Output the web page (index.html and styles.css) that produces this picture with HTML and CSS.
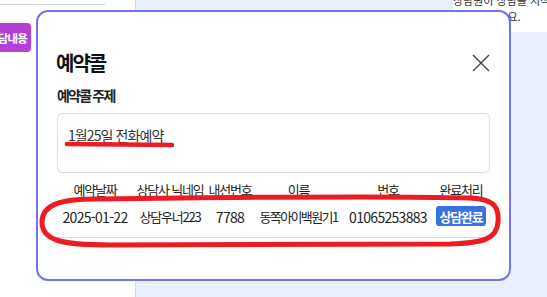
FILE: index.html
```html
<!DOCTYPE html>
<html lang="ko">
<head>
    <meta charset="UTF-8">
    <title>예약콜</title>
    <link rel="stylesheet" href="styles.css">
</head>
<body>

<div class="app">
    <aside class="side">
        <div class="side-line"></div>
        <button class="memo-btn">상담내용</button>
    </aside>
    <main class="main">
        <div class="notice">상담원이 상담을 시작하면 보여드려<br>요.</div>
    </main>
</div>

<div class="modal">
    <div class="modal-head">
        <h2>예약콜</h2>
        <button class="close" aria-label="닫기">
            <svg width="18" height="18" viewBox="0 0 18 18">
                <path d="M1 1 L17 17 M17 1 L1 17" stroke="#444" stroke-width="1.4" fill="none"/>
            </svg>
        </button>
    </div>
    <div class="field-label">예약콜 주제</div>
    <div class="subject">1월25일 전화예약</div>

    <div class="thead">
        <span>예약날짜</span>
        <span>상담사 닉네임</span>
        <span>내선번호</span>
        <span>이름</span>
        <span>번호</span>
        <span>완료처리</span>
    </div>
    <div class="trow">
        <span class="num">2025-01-22</span>
        <span class="mix">상담우너223</span>
        <span class="num">7788</span>
        <span class="ko">동쪽아이백원기1</span>
        <span class="num">01065253883</span>
        <span><button class="done-btn">상담완료</button></span>
    </div>
</div>

<!-- 빨간 표시 -->
<svg class="marks" width="547" height="297" viewBox="0 0 547 297">
    <path d="M67 144 L172 145" stroke="#ed1c24" stroke-width="4.5" stroke-linecap="round" fill="none"/>
    <path d="M95 199 C250 197 400 196 470 198 C497 199 499 210 498 222 C497 238 485 243 450 244 L110 245 C60 245 42 240 42 222 C42 205 60 199 95 199 Z"
          stroke="#ed1c24" stroke-width="5" fill="none"/>
</svg>

</body>
</html>
```

FILE: styles.css
```css
body {
    margin: 0;
    font-family: "Noto Sans CJK KR", "Noto Sans", sans-serif;
    color: #222;
    overflow: hidden;
}
.app {
    display: flex;
    height: 297px;
    width: 547px;
    overflow: hidden;
}
.side {
    width: 135px;
    flex-shrink: 0;
    background: #fff;
    border-right: 1px solid #d9d9d9;
}
.side-line {
    height: 1px;
    background: #cfcfcf;
    margin: 4px 30px 0 0;
}
.memo-btn {
    display: block;
    margin: 18px 0 0 -17px;
    height: 29px;
    padding: 0 4px 0 5px;
    background: #b33fd6;
    color: #fff;
    border: none;
    border-radius: 4px;
    font-family: inherit;
    font-size: 11.5px;
    font-weight: 700;
    letter-spacing: -0.8px;
}
.main {
    flex: 1;
    background: #e9effc;
    display: flex;
    justify-content: flex-end;
    align-items: flex-start;
}
.notice {
    flex-shrink: 0;
    width: 122px;
    margin: -8px -28px 0 0;
    padding-bottom: 8px;
    background: #fff;
    font-size: 11px;
    line-height: 16px;
    text-align: center;
    color: #333;
    white-space: nowrap;
}
.modal {
    position: absolute;
    left: 36px;
    top: 10px;
    width: 475px;
    height: 271px;
    box-sizing: border-box;
    padding: 38px 19px 0;
    background: #fff;
    border: 2px solid #7373ee;
    border-radius: 12px;
}
.modal-head {
    display: flex;
    justify-content: space-between;
    align-items: center;
}
.modal-head h2 {
    margin: 0 0 0 -1px;
    font-size: 20px;
    line-height: 25px;
    font-weight: 700;
    color: #111;
    letter-spacing: -2px;
}
.close {
    border: none;
    background: none;
    padding: 0;
    width: 18px;
    height: 18px;
    display: flex;
}
.field-label {
    margin-top: 10px;
    font-size: 14px;
    line-height: 20px;
    font-weight: 700;
    letter-spacing: -1.8px;
}
.subject {
    margin-top: 8px;
    height: 60px;
    box-sizing: border-box;
    padding: 11px 10px 0;
    border: 1px solid #dcdcdc;
    border-radius: 5px;
    font-size: 14px;
    line-height: 20px;
    letter-spacing: -0.9px;
    color: #333;
}
.thead, .trow {
    display: grid;
    grid-template-columns: 76px 74px 46px 91px 88px 58px;
    font-size: 13px;
    line-height: 18px;
}
.thead span, .trow span {
    justify-self: center;
    white-space: nowrap;
}
.thead {
    margin-top: 8px;
    color: #222;
    letter-spacing: -1.2px;
}
.trow {
    padding: 7px 0 11px;
    border-bottom: 1px solid #dcdcdc;
    color: #222;
}
.trow span {
    padding-top: 1.5px;
}
.trow .num {
    font-size: 14px;
    letter-spacing: -0.7px;
}
.trow .mix {
    letter-spacing: -1.2px;
}
.trow .ko {
    letter-spacing: -1.6px;
}
.done-btn {
    display: block;
    height: 20px;
    margin-top: -1.5px;
    padding: 0 3px;
    background: #3a70e0;
    color: #fff;
    border: none;
    border-radius: 3px;
    font-family: inherit;
    font-size: 13px;
    font-weight: 700;
    letter-spacing: -1.2px;
}
.marks {
    position: absolute;
    left: 0;
    top: 0;
    pointer-events: none;
}
```
